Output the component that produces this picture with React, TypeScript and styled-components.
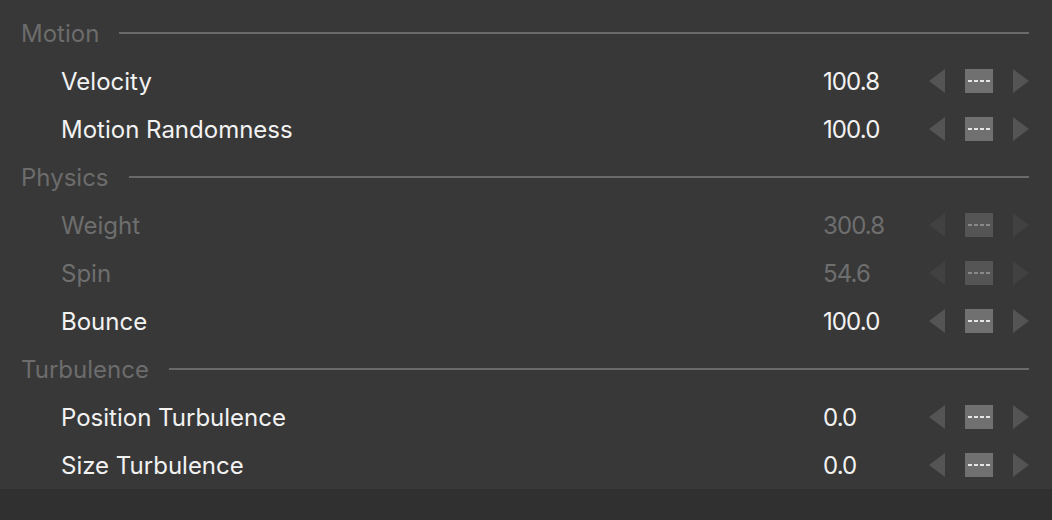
import React from "react";
import styled, { createGlobalStyle } from "styled-components";

const Global = createGlobalStyle`
  html, body { margin: 0; padding: 0; background: #303030; }
  body { font-family: Inter, "Noto Sans", sans-serif; }
`;

const Panel = styled.div`
  background: #383838;
  padding: 9px 23px 0 21px;
  width: 1052px;
  box-sizing: border-box;
`;

const SectionHeader = styled.div`
  display: flex;
  align-items: center;
  height: 48px;
  gap: 20px;
  color: #6c6c6c;
  font-size: 24px;
`;

const Rule = styled.div`
  flex: 1;
  height: 2px;
  background: #6a6a6a;
`;

const Row = styled.div<{ $disabled?: boolean }>`
  display: grid;
  grid-template-columns: 1fr 106px auto;
  align-items: center;
  height: 48px;
  padding-left: 40px;
  font-size: 24px;
  color: ${(p) => (p.$disabled ? "#6e6e6e" : "#f2f2f2")};
`;

const Label = styled.span``;
const Value = styled.span`
  letter-spacing: -0.9px;
`;

const Controls = styled.div`
  display: flex;
  align-items: center;
  gap: 20px;
`;

const Arrow = styled.svg<{ $disabled?: boolean }>`
  display: block;
  width: 16px;
  height: 24px;
  fill: ${(p) => (p.$disabled ? "#414141" : "#545454")};
`;

const KeyButton = styled.div<{ $disabled?: boolean }>`
  width: 28px;
  height: 24px;
  background: ${(p) => (p.$disabled ? "#555555" : "#707070")};
  display: flex;
  align-items: center;
  justify-content: center;
  gap: 2px;
`;

const Dash = styled.span<{ $disabled?: boolean }>`
  width: 4px;
  height: 2px;
  background: ${(p) => (p.$disabled ? "#8a8a8a" : "#e4e4e4")};
`;

type Param = { label: string; value: string; disabled?: boolean };
type Section = { title: string; params: Param[] };

const sections: Section[] = [
  {
    title: "Motion",
    params: [
      { label: "Velocity", value: "100.8" },
      { label: "Motion Randomness", value: "100.0" },
    ],
  },
  {
    title: "Physics",
    params: [
      { label: "Weight", value: "300.8", disabled: true },
      { label: "Spin", value: "54.6", disabled: true },
      { label: "Bounce", value: "100.0" },
    ],
  },
  {
    title: "Turbulence",
    params: [
      { label: "Position Turbulence", value: "0.0" },
      { label: "Size Turbulence", value: "0.0" },
    ],
  },
];

const ParamRow: React.FC<Param> = ({ label, value, disabled }) => (
  <Row $disabled={disabled}>
    <Label>{label}</Label>
    <Value>{value}</Value>
    <Controls>
      <Arrow $disabled={disabled} viewBox="0 0 16 24">
        <polygon points="16,0 16,24 0,12" />
      </Arrow>
      <KeyButton $disabled={disabled}>
        {[0, 1, 2, 3].map((i) => (
          <Dash key={i} $disabled={disabled} />
        ))}
      </KeyButton>
      <Arrow $disabled={disabled} viewBox="0 0 16 24">
        <polygon points="0,0 0,24 16,12" />
      </Arrow>
    </Controls>
  </Row>
);

export default function App() {
  return (
    <>
      <Global />
      <Panel>
        {sections.map((s) => (
          <React.Fragment key={s.title}>
            <SectionHeader>
              <span>{s.title}</span>
              <Rule />
            </SectionHeader>
            {s.params.map((p) => (
              <ParamRow key={p.label} {...p} />
            ))}
          </React.Fragment>
        ))}
      </Panel>
    </>
  );
}
